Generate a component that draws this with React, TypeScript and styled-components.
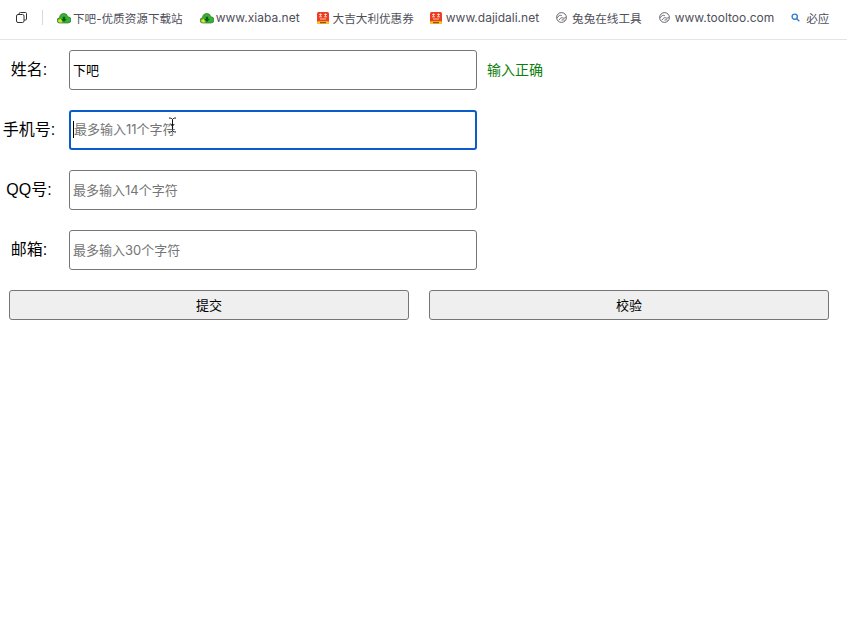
import React from "react";
import styled, { createGlobalStyle } from "styled-components";

const Global = createGlobalStyle`
  html, body { margin: 0; padding: 0; background: #fff; }
  body { font-family: "Inter", "Noto Sans CJK SC", sans-serif; }
`;

const Page = styled.div`
  width: 847px;
  height: 635px;
  overflow: hidden;
  position: relative;
`;

const Toolbar = styled.div`
  height: 40px;
  box-sizing: border-box;
  border-bottom: 1px solid #e4e4e4;
  display: flex;
  align-items: center;
  padding: 0 0 4px 16px;
  white-space: nowrap;
  overflow: hidden;
`;

const Divider = styled.div`
  width: 1px;
  height: 15px;
  background: #d9d9d9;
  margin: 0 14px 0 15px;
`;

const Bookmark = styled.div<{ $gap: number }>`
  display: flex;
  align-items: center;
  margin-right: ${(p) => p.$gap}px;
`;

const IconSlot = styled.span<{ $indent: number }>`
  width: 16px;
  padding-left: ${(p) => p.$indent}px;
  box-sizing: border-box;
  flex: none;
  display: flex;
  align-items: center;
`;

const BookmarkText = styled.span<{ $size: number }>`
  font: ${(p) => p.$size}px "Inter", "Noto Sans CJK SC", sans-serif;
  color: #4f4f5b;
`;

const Form = styled.div`
  display: flex;
  flex-direction: column;
  gap: 20px;
  padding-top: 10px;
`;

const Row = styled.div`
  display: flex;
  align-items: center;
  height: 40px;
`;

const Label = styled.label`
  width: 58px;
  flex: none;
  padding-bottom: 4px;
  text-align: center;
  font: 16px "Liberation Sans", "Noto Sans CJK SC", sans-serif;
  color: #000;
`;

const Input = styled.input<{ $focus?: boolean }>`
  width: 408px;
  height: 40px;
  margin-left: 11px;
  box-sizing: border-box;
  padding: 0 3px ${(p) => (p.$focus ? 2 : 1)}px;
  border: ${(p) => (p.$focus ? "2px solid #0a5cc9" : "1px solid #767676")};
  border-radius: 3px;
  outline: none;
  background: #fff;
  color: #000;
  font: 13px "Inter", "Noto Sans CJK SC", sans-serif;
  &::placeholder { color: #757575; opacity: 1; }
`;

const Message = styled.span`
  margin-left: 10px;
  padding-bottom: 2px;
  font: 14px "Liberation Sans", "Noto Sans CJK SC", sans-serif;
  color: #0a800a;
`;

const Actions = styled.div`
  display: flex;
  gap: 20px;
  padding: 20px 0 0 9px;
`;

const Button = styled.button`
  width: 400px;
  height: 30px;
  box-sizing: border-box;
  padding: 0 0 2px;
  background: #efefef;
  border: 1px solid #767676;
  border-radius: 3px;
  color: #000;
  font: 13px "Liberation Sans", "Noto Sans CJK SC", sans-serif;
`;

const Caret = styled.span`
  position: absolute;
  left: 73px;
  top: 121px;
  width: 1px;
  height: 17px;
  background: #000;
`;

const Pointer = styled.svg`
  position: absolute;
  left: 168px;
  top: 117px;
`;

const CopyIcon = () => (
  <svg width="11" height="11" viewBox="0 0 11 11" fill="none" stroke="#333" strokeWidth="1">
    <rect x="0.5" y="2.5" width="7.5" height="8" rx="1.5" />
    <path d="M3 2.5V2a1.500 1.500 0 0 1 1.500-1.500h5a1 1 0 0 1 1 1v5.500a1 1 0 0 1-1 1H8" />
  </svg>
);

const CloudIcon = () => (
  <svg width="14" height="12" viewBox="0 0 14 12">
    <path d="M3 11a2.600 2.600 0 0 1-.5-5.200A4.600 4.600 0 0 1 7 1.500a3.800 3.800 0 0 1 3.700 3.300A3 3 0 0 1 11 11z" fill="#33b52e" stroke="#3c6a33" strokeWidth="0.7" />
    <path d="M1.300 8a2 2 0 0 0 1.700 2.600h2.500L3.800 6.800z" fill="#e6df2a" />
    <path d="M5.800 4.800h2.400v2.300h1.600L7 10 4.200 7.100h1.600z" fill="#0f5a1a" />
  </svg>
);

const DealIcon = () => (
  <svg width="12" height="12" viewBox="0 0 12 12">
    <rect width="12" height="12" rx="1.500" fill="#ee3d27" />
    <rect y="9.300" width="12" height="2.700" rx="1" fill="#f7c71e" />
    <path d="M2 2.500h3M3.500 1.500v3M2 4.800h3M7 2.500h3M8.500 1.500v3M7 4.800h3M3 7h6" stroke="#ffe9c8" strokeWidth="0.8" fill="none" />
    <rect x="3" y="10.200" width="6" height="1" fill="#7a3410" />
  </svg>
);

const ToolIcon = () => (
  <svg width="11" height="11" viewBox="0 0 11 11" fill="none" stroke="#55555d" strokeWidth="0.9">
    <circle cx="5.500" cy="5.500" r="4.900" />
    <path d="M1.300 5.800C2.500 3.600 4 2.800 5.800 3.700M3 8c1-1.600 2.400-2.500 3.300-2.300s1.200 1 3.500-.2M5.500 8.200c1-.5 2-.6 3 0" />
  </svg>
);

const SearchIcon = () => (
  <svg width="9" height="9" viewBox="0 0 9 9" fill="none" stroke="#2f7fd0" strokeWidth="1.400">
    <circle cx="3.700" cy="3.700" r="2.600" />
    <path d="M5.700 5.700L8.300 8.300" />
  </svg>
);

const bookmarks = [
  { icon: <CloudIcon />, text: "下吧-优质资源下载站", size: 11.6, indent: 0, gap: 17 },
  { icon: <CloudIcon />, text: "www.xiaba.net", size: 12, indent: 0, gap: 17 },
  { icon: <DealIcon />, text: "大吉大利优惠券", size: 11.6, indent: 0, gap: 16 },
  { icon: <DealIcon />, text: "www.dajidali.net", size: 12, indent: 0, gap: 17 },
  { icon: <ToolIcon />, text: "兔兔在线工具", size: 11.6, indent: 0, gap: 17 },
  { icon: <ToolIcon />, text: "www.tooltoo.com", size: 12, indent: 0, gap: 16 },
  { icon: <SearchIcon />, text: "必应", size: 11.6, indent: 1, gap: 0 },
];

const fields = [
  { label: "姓名:", value: "下吧", placeholder: "" },
  { label: "手机号:", placeholder: "最多输入11个字符", focus: true },
  { label: "QQ号:", placeholder: "最多输入14个字符" },
  { label: "邮箱:", placeholder: "最多输入30个字符" },
];

export default function App() {
  return (
    <Page>
      <Global />
      <Toolbar>
        <CopyIcon />
        <Divider />
        {bookmarks.map((b) => (
          <Bookmark key={b.text} $gap={b.gap}>
            <IconSlot $indent={b.indent}>{b.icon}</IconSlot>
            <BookmarkText $size={b.size}>{b.text}</BookmarkText>
          </Bookmark>
        ))}
      </Toolbar>
      <Form>
        {fields.map((f) => (
          <Row key={f.label}>
            <Label>{f.label}</Label>
            <Input defaultValue={f.value} placeholder={f.placeholder} $focus={f.focus} />
            {f.value && <Message>输入正确</Message>}
          </Row>
        ))}
      </Form>
      <Actions>
        <Button>提交</Button>
        <Button>校验</Button>
      </Actions>
      <Caret />
      <Pointer width="9" height="16" viewBox="0 0 9 16" fill="none" stroke="#111" strokeWidth="1">
        <path d="M1 1c2 0 3 .5 3.500 1.500C5 1.500 6 1 8 1M4.500 2.500v10M1 15c2 0 3-.5 3.500-1.500C5 14.500 6 15 8 15M3 8h3" />
      </Pointer>
    </Page>
  );
}
